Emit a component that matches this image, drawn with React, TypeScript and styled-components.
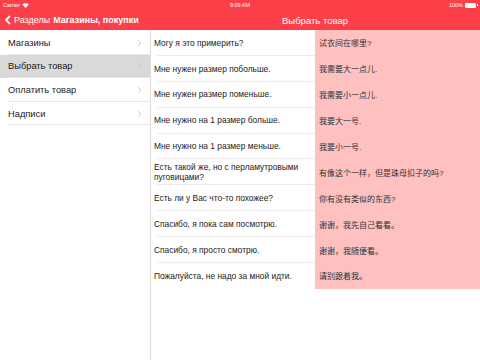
import React from "react";
import styled, { createGlobalStyle } from "styled-components";

const Global = createGlobalStyle`
  html, body { margin: 0; padding: 0; background: #fff; }
  body { font-family: "Liberation Sans", Arial, sans-serif; }
  * { box-sizing: border-box; }
`;

const Screen = styled.div`
  width: 480px;
  height: 360px;
  display: flex;
  flex-direction: column;
  overflow: hidden;
  background: #fff;
`;

const Header = styled.div`
  background: #fc3f48;
  color: #fff;
  height: 30px;
  display: flex;
  flex-direction: column;
`;

const StatusBar = styled.div`
  height: 10px;
  display: grid;
  grid-template-columns: 1fr auto 1fr;
  align-items: center;
  padding: 0 3px;
  font-size: 5.5px;
  color: #fff;
`;

const StatusLeft = styled.div`
  display: flex;
  align-items: center;
  gap: 2px;
`;

const StatusRight = styled.div`
  display: flex;
  align-items: center;
  justify-content: flex-end;
  gap: 2px;
  padding-right: 1px;
`;

const Battery = styled.div`
  width: 11px;
  height: 5px;
  background: #fff;
  border-radius: 1px;
  position: relative;
  &::after {
    content: "";
    position: absolute;
    right: -1.5px;
    top: 1.5px;
    width: 1px;
    height: 2px;
    background: #fff;
  }
`;

const NavBar = styled.div`
  height: 20px;
  display: flex;
  align-items: center;
`;

const NavLeft = styled.div`
  width: 150px;
  display: flex;
  align-items: center;
  padding-left: 5px;
  font-size: 9px;
  white-space: nowrap;
`;

const BackText = styled.span`
  margin-left: 3px;
`;

const NavTitleLeft = styled.span`
  margin-left: 3px;
  font-weight: bold;
`;

const NavTitle = styled.div`
  flex: 1;
  text-align: center;
  font-size: 9.5px;
  font-weight: 500;
`;

const Body = styled.div`
  flex: 1;
  display: flex;
`;

const Sidebar = styled.div`
  width: 151px;
  border-right: 1px solid #dcdcdc;
  padding-top: 1px;
`;

const MenuItem = styled.div<{ $active?: boolean }>`
  height: 23.6px;
  display: flex;
  align-items: center;
  justify-content: space-between;
  padding: 0 8px;
  font-size: 9.3px;
  color: #222;
  background: ${(p) => (p.$active ? "#d9d9d9" : "#fff")};
  position: relative;
  &::after {
    content: "";
    position: absolute;
    left: 8px;
    right: 0;
    bottom: 0;
    height: 1px;
    background: #e6e6e6;
  }
`;

const Content = styled.div`
  flex: 1;
  display: flex;
  flex-direction: column;
`;

const Row = styled.div`
  height: 25.9px;
  display: grid;
  grid-template-columns: 164px 1fr;
`;

const RuCell = styled.div<{ $last?: boolean }>`
  display: flex;
  align-items: center;
  padding: 0 3px;
  font-size: 8.4px;
  line-height: 10.5px;
  color: #222;
  position: relative;
  &::after {
    content: "";
    display: ${(p) => (p.$last ? "none" : "block")};
    position: absolute;
    left: 6px;
    right: 0;
    bottom: 0;
    height: 1px;
    background: #ececec;
  }
`;

const ZhCell = styled.div`
  display: flex;
  align-items: center;
  padding: 0 4px;
  background: #ffc0c0;
  font-family: "Liberation Sans", "Noto Sans CJK SC", sans-serif;
  font-size: 8px;
  color: #333;
`;

const Chevron = () => (
  <svg width="5" height="8" viewBox="0 0 5 8">
    <polyline points="1,1 4,4 1,7" fill="none" stroke="#c7c7cc" strokeWidth="0.9" />
  </svg>
);

const BackChevron = () => (
  <svg width="6" height="10" viewBox="0 0 6 10">
    <polyline points="5,1 1,5 5,9" fill="none" stroke="#fff" strokeWidth="1.8" />
  </svg>
);

const Wifi = () => (
  <svg width="7" height="5" viewBox="0 0 7 5">
    <path d="M0.3 1.6 A4.5 4.5 0 0 1 6.7 1.6 L3.5 5 Z" fill="#fff" />
  </svg>
);

const menu = ["Магазины", "Выбрать товар", "Оплатить товар", "Надписи"];

const phrases: [string, string][] = [
  ["Могу я это примерить?", "试衣间在哪里?"],
  ["Мне нужен размер побольше.", " 我需要大一点儿."],
  ["Мне нужен размер поменьше.", "我需要小一点儿."],
  ["Мне нужно на 1 размер больше.", "我要大一号."],
  ["Мне нужно на 1 размер меньше.", "我要小一号."],
  ["Есть такой же, но с перламутровыми пуговицами?", "有像这个一样，但是珠母扣子的吗?"],
  ["Есть ли у Вас что-то похожее?", "你有没有类似的东西?"],
  ["Спасибо, я пока сам посмотрю.", "谢谢，我先自己看看。"],
  ["Спасибо, я просто смотрю.", "谢谢，我随便看。"],
  ["Пожалуйста, не надо за мной идти.", "请别跟着我。"],
];

export default function App() {
  return (
    <Screen>
      <Global />
      <Header>
        <StatusBar>
          <StatusLeft>
            <span>Carrier</span>
            <Wifi />
          </StatusLeft>
          <span>9:09 AM</span>
          <StatusRight>
            <span>100%</span>
            <Battery />
          </StatusRight>
        </StatusBar>
        <NavBar>
          <NavLeft>
            <BackChevron />
            <BackText>Разделы</BackText>
            <NavTitleLeft>Магазины, покупки</NavTitleLeft>
          </NavLeft>
          <NavTitle>Выбрать товар</NavTitle>
        </NavBar>
      </Header>
      <Body>
        <Sidebar>
          {menu.map((m, i) => (
            <MenuItem key={m} $active={i === 1}>
              <span>{m}</span>
              <Chevron />
            </MenuItem>
          ))}
        </Sidebar>
        <Content>
          {phrases.map(([ru, zh], i) => (
            <Row key={i}>
              <RuCell $last={i === phrases.length - 1}>{ru}</RuCell>
              <ZhCell>{zh}</ZhCell>
            </Row>
          ))}
        </Content>
      </Body>
    </Screen>
  );
}
